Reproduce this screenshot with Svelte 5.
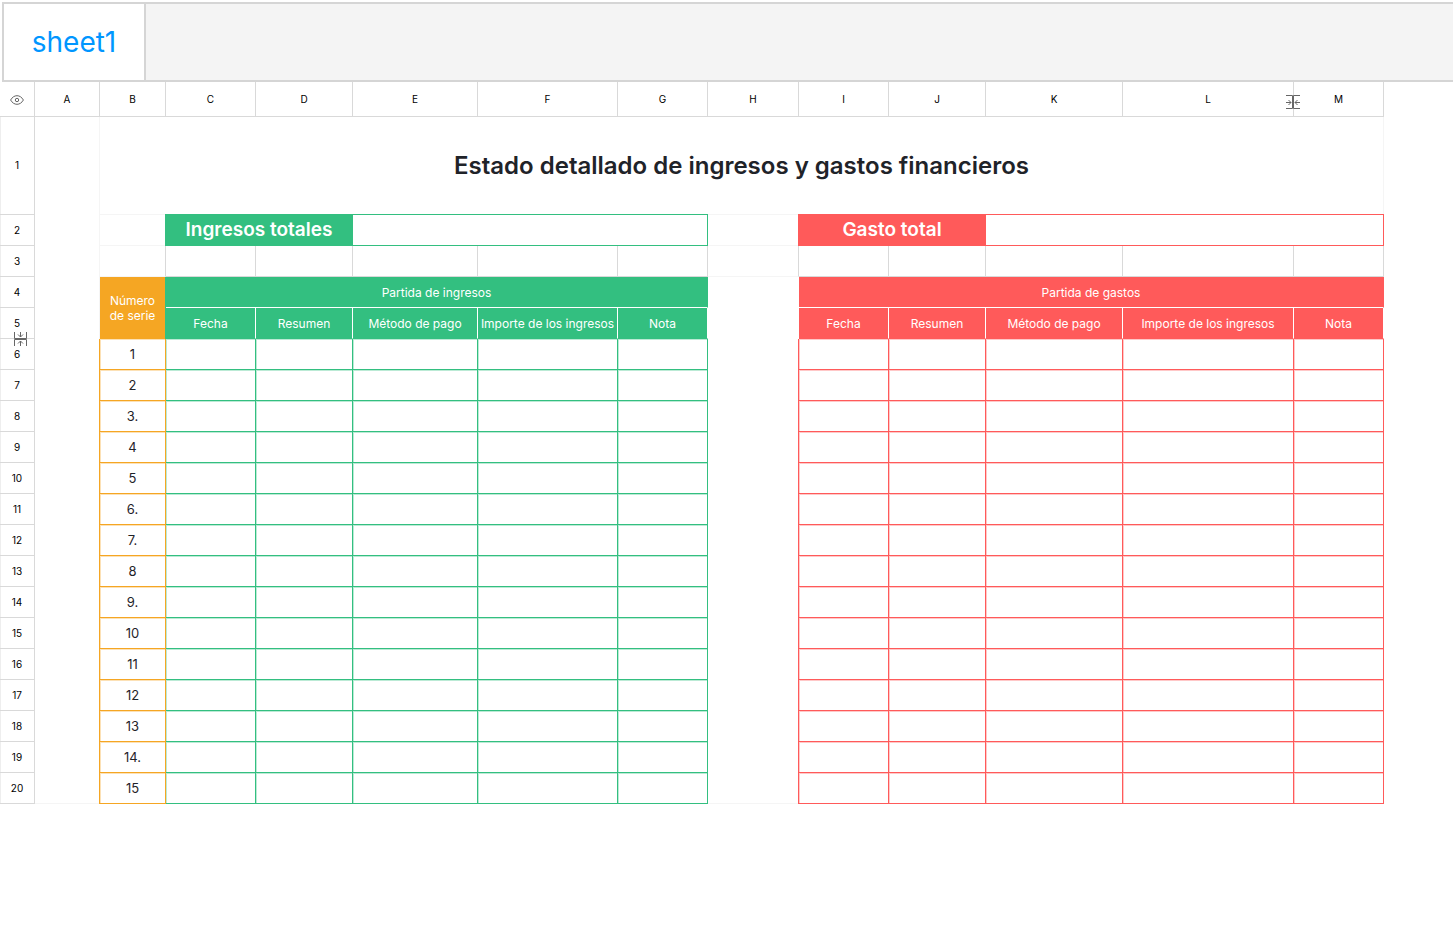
<script lang="ts">
	const columns = [
		{name: 'A', width: 65},
		{name: 'B', width: 66},
		{name: 'C', width: 90},
		{name: 'D', width: 97},
		{name: 'E', width: 125},
		{name: 'F', width: 140},
		{name: 'G', width: 90},
		{name: 'H', width: 91},
		{name: 'I', width: 90},
		{name: 'J', width: 97},
		{name: 'K', width: 137},
		{name: 'L', width: 171},
		{name: 'M', width: 90},
	];

	const sheets = ['sheet1'];
	let active = $state('sheet1');

	const fields = ['Fecha', 'Resumen', 'Método de pago', 'Importe de los ingresos', 'Nota'];
	const serials = ['1', '2', '3.', '4', '5', '6.', '7.', '8', '9.', '10', '11', '12', '13', '14.', '15'];
</script>

<nav class="tabs">
	{#each sheets as sheet}
		<button class="tab" class:active={sheet === active} onclick={() => active = sheet}>{sheet}</button>
	{/each}
</nav>

<table>
	<colgroup>
		<col style:width="35px">
		{#each columns as column}
			<col style:width="{column.width}px">
		{/each}
	</colgroup>
	<thead>
		<tr>
			<th>
				<button class="eye" aria-label="Mostrar">
					<svg width="14" height="10" viewBox="0 0 14 10">
						<path d="M.6 5C2.2 2.200 4.400 .7 7 .7S11.800 2.200 13.400 5C11.800 7.800 9.600 9.300 7 9.300S2.200 7.800 .6 5Z"/>
						<circle cx="7" cy="5" r="1.700"/>
					</svg>
				</button>
			</th>
			{#each columns as column}
				<th scope="col">
					{column.name}
					{#if column.name === 'L'}
						<svg class="fold-column" width="16" height="16" viewBox="0 0 16 16">
							<path d="M1 1.500H7.500V14.500H1M15 1.500H8.500V14.500H15M1 8.500H6M3.500 6L6 8.500L3.500 11M15 8.500H10M12.500 6L10 8.500L12.500 11"/>
						</svg>
					{/if}
				</th>
			{/each}
		</tr>
	</thead>
	<tbody>
		<tr class="title">
			<th scope="row">1</th>
			<td class="blank" rowspan="20"></td>
			<td class="faint" colspan="12">Estado detallado de ingresos y gastos financieros</td>
		</tr>
		<tr class="totals">
			<th scope="row">2</th>
			<td class="faint"></td>
			<td class="green fill top left" colspan="2">Ingresos totales</td>
			<td class="green top" colspan="3"></td>
			<td class="faint top"></td>
			<td class="red fill top left" colspan="2">Gasto total</td>
			<td class="red top" colspan="3"></td>
		</tr>
		<tr>
			<th scope="row">3</th>
			<td class="faint grid-right"></td>
			{#each {length: 5} as _}
				<td></td>
			{/each}
			<td class="faint grid-right"></td>
			{#each {length: 5} as _}
				<td></td>
			{/each}
		</tr>
		<tr>
			<th scope="row">4</th>
			<td class="orange fill serial-head" rowspan="2">Número de serie</td>
			<td class="green fill group left" colspan="5">Partida de ingresos</td>
			<td class="blank gap" rowspan="17"></td>
			<td class="red fill group" colspan="5">Partida de gastos</td>
		</tr>
		<tr>
			<th scope="row">
				5
				<svg class="fold-row" width="16" height="16" viewBox="0 0 16 16">
					<path d="M2.500 1V7.500H14.500V1M2.500 15V8.500H14.500V15M8.500 1V6M6 3.500L8.500 6L11 3.500M8.500 15V10M6 12.500L8.500 10L11 12.500"/>
				</svg>
			</th>
			{#each fields as field, j}
				<td class="green fill field" class:left={j === 0}>{field}</td>
			{/each}
			{#each fields as field}
				<td class="red fill field">{field}</td>
			{/each}
		</tr>
		{#each serials as serial, i}
			<tr class="entry">
				<th scope="row">{i + 6}</th>
				<td class="orange left serial">{serial}</td>
				{#each fields as _}
					<td class="green"></td>
				{/each}
				{#each fields as _, j}
					<td class="red" class:left={j === 0}></td>
				{/each}
			</tr>
		{/each}
	</tbody>
</table>

<style>
	:global(body) {
		background: #fff;
		font-family: Inter, "Liberation Sans", sans-serif;
	}

	.tabs {
		display: flex;
		height: 76px;
		margin: 2px 0 0 2px;
		border: 2px solid #d5d5d5;
		border-right: 0;
		background: #f4f4f4;
	}
	.tab {
		min-width: 142px;
		padding: 0 24px;
		border: 0;
		border-right: 2px solid #d5d5d5;
		background: transparent;
		color: #333;
		font: 28px Inter, sans-serif;
	}
	.tab.active {
		background: #fff;
		color: #0096ff;
	}

	table {
		width: calc(100% - 69px);
		min-width: 1200px;
		table-layout: fixed;
		border-collapse: separate;
		border-spacing: 0;
		color: #1f2329;
		font-size: 12px;
		line-height: 15px;
	}
	th, td {
		--line: #d9d9d9;
		box-sizing: border-box;
		height: 31px;
		padding: 0;
		border: 0 solid var(--line);
		border-width: 0 1px 1px 0;
		text-align: center;
		vertical-align: middle;
	}
	th {
		position: relative;
		color: #000;
		font-size: 10px;
		font-weight: 400;
	}
	thead th {
		height: 35px;
	}
	tbody th {
		box-shadow: inset 1px 0 #eee;
	}

	.title td {
		height: 98px;
		font-size: 24px;
		font-weight: 600;
		line-height: 30px;
	}
	.totals td {
		font-size: 19px;
		font-weight: 600;
		line-height: 24px;
	}

	.faint {
		--line: #f5f5f5;
	}
	.grid-right {
		border-right-color: #d9d9d9;
	}
	.blank {
		border-color: #f5f5f5;
	}
	.gap {
		border-right-color: transparent;
	}
	.green {
		--line: #33bf80;
		--soft: #33bf8055;
	}
	.red {
		--line: #ff5a5a;
		--soft: #ff5a5a55;
	}
	.orange {
		--line: #f5a623;
		--soft: #f5a62355;
	}
	.fill {
		background: var(--line);
		color: #fff;
	}
	.group {
		border-bottom-color: #fff;
	}
	.field {
		border-right-color: #fff;
		white-space: nowrap;
	}
	.serial-head {
		padding: 0 8px;
	}
	.serial {
		font-size: 13px;
	}

	/* Merged neighbours own the shared edge, so it is painted over them */
	.top {
		box-shadow: 0 -1px var(--line);
	}
	.left {
		box-shadow: -1px 0 var(--line);
	}
	.top.left {
		box-shadow: -1px 0 var(--line), 0 -1px var(--line), -1px -1px var(--line);
	}
	.entry td {
		box-shadow: inset 1px 1px var(--soft);
	}
	.entry td.left {
		box-shadow: -1px 0 var(--line), inset 1px 1px var(--soft);
	}

	.eye {
		display: flex;
		margin: 2px auto 0;
		padding: 0;
		border: 0;
		background: none;
	}
	svg {
		fill: none;
		stroke: #666;
		stroke-width: 1;
	}
	.fold-column {
		position: absolute;
		z-index: 1;
		top: 12px;
		right: -8px;
	}
	.fold-row {
		position: absolute;
		z-index: 1;
		bottom: -9px;
		left: 12px;
	}
</style>
